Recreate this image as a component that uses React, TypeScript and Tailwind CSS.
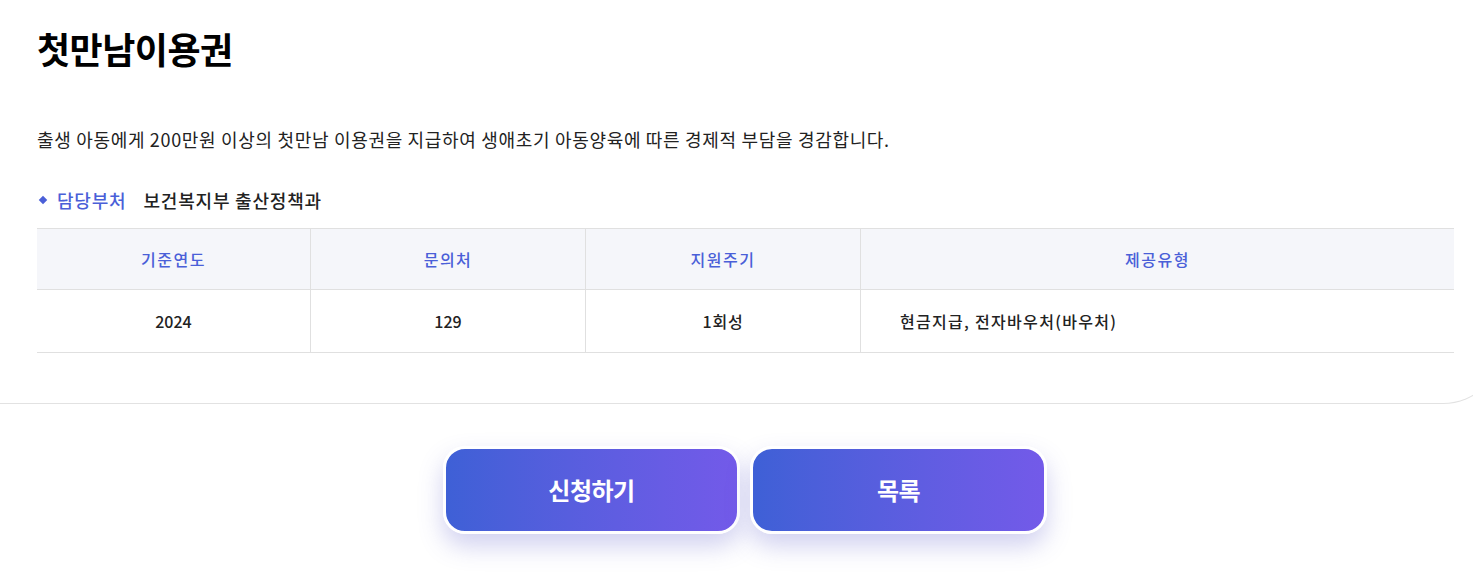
import React from "react";

const cols = [
  { head: "기준연도", value: "2024", w: "w-[274px]", align: "text-center" },
  { head: "문의처", value: "129", w: "w-[275px]", align: "text-center" },
  { head: "지원주기", value: "1회성", w: "w-[275px]", align: "text-center" },
  { head: "제공유형", value: "현금지급, 전자바우처(바우처)", w: "flex-1", align: "text-left pl-[39px]" },
];

export default function App() {
  return (
    <div
      className="w-full h-[575px] overflow-hidden bg-white text-[#222]"
      style={{ fontFamily: '"Noto Sans CJK KR", "Noto Sans", sans-serif' }}
    >
      {/* detail card */}
      <div className="w-[1503px] border-b border-r border-[#e2e2e2] rounded-br-[60px] pl-[37px] pr-[48px] pt-[22px] pb-[50px]">
        <h1 className="text-[36px] font-bold text-black leading-[52px] tracking-[-0.5px]">첫만남이용권</h1>

        <p className="mt-[51px] text-[18px] leading-[28px] tracking-[0.68px] text-[#222]">
          출생 아동에게 200만원 이상의 첫만남 이용권을 지급하여 생애초기 아동양육에 따른 경제적 부담을 경감합니다.
        </p>

        <div className="mt-[33px] flex items-center text-[18px] leading-[28px] font-medium tracking-[0.8px]">
          <span className="w-[6px] h-[6px] bg-[#4a5fd8] rotate-45 ml-[3px] mr-[11px]" />
          <span className="text-[#4a5fd8]">담당부처</span>
          <span className="ml-[17px] text-[#222]">보건복지부 출산정책과</span>
        </div>

        <div className="mt-[14px] border-t border-[#e0e0e0]">
          <div className="flex bg-[#f5f6fa] border-b border-[#e0e0e0] h-[61px]">
            {cols.map((c, i) => (
              <div
                key={c.head}
                className={`${c.w} flex items-center justify-center text-[16px] font-medium tracking-[1.5px] text-[#4a5fd8] ${i < cols.length - 1 ? "border-r border-[#e0e0e0]" : ""}`}
              >
                {c.head}
              </div>
            ))}
          </div>
          <div className="flex border-b border-[#e0e0e0] h-[63px]">
            {cols.map((c, i) => (
              <div
                key={c.head}
                className={`${c.w} ${c.align} flex items-center ${c.align.includes("center") ? "justify-center" : ""} text-[16px] font-medium text-[#222] ${i === 3 ? "tracking-[1.3px]" : i === 2 ? "tracking-[0.8px]" : ""} ${i < cols.length - 1 ? "border-r border-[#e0e0e0]" : ""}`}
              >
                {c.value}
              </div>
            ))}
          </div>
        </div>
      </div>

      {/* buttons */}
      <div className="flex justify-center gap-[10px] pl-[17px] mt-[42px]">
        {["신청하기", "목록"].map((label) => (
          <button
            key={label}
            className="w-[297px] h-[88px] rounded-[22px] border-[3px] border-white bg-gradient-to-r from-[#3e60d6] to-[#735ae9] text-white text-[24px] font-bold tracking-[-0.5px] shadow-[0_12px_24px_rgba(90,90,200,0.28)]"
          >
            {label}
          </button>
        ))}
      </div>
    </div>
  );
}
